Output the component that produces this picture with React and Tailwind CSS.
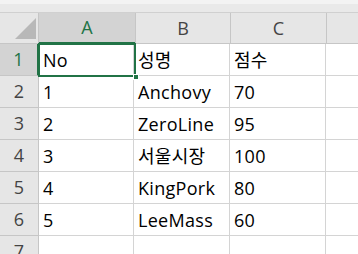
import React from "react";

const rows = [
  ["No", "성명", "점수"],
  ["1", "Anchovy", "70"],
  ["2", "ZeroLine", "95"],
  ["3", "서울시장", "100"],
  ["4", "KingPork", "80"],
  ["5", "LeeMass", "60"],
  ["", "", ""],
];

const font = { fontFamily: '"Open Sans", "Noto Sans CJK KR", sans-serif' };

export default function App() {
  return (
    <div className="w-[358px] h-[254px] overflow-hidden bg-white relative" style={font}>
      {/* top strip */}
      <div className="h-[13px] flex flex-col">
        <div className="h-[4px] bg-[#f3f3f3]" />
        <div className="flex-1 bg-[#e9e9e9] border-b border-[#d0d0d0]" />
      </div>
      {/* column header */}
      <div className="flex h-[31px] bg-[#e6e6e6] border-b border-[#c6c6c6]">
        <div className="w-[39px] shrink-0 border-r border-[#c6c6c6] relative">
          <svg className="absolute left-[15px] top-[5px]" width="21" height="21" viewBox="0 0 21 21">
            <polygon points="21,0 21,21 0,21" fill="#b8b8b8" />
          </svg>
        </div>
        <div className="w-[96px] shrink-0 bg-[#d3d3d3] border-b-2 border-[#217346] flex items-center justify-center text-[18px] text-[#217346] -mb-px">
          A
        </div>
        <div className="w-[96px] shrink-0 border-r border-l border-[#c6c6c6] flex items-center justify-center text-[18px] text-[#444]">
          B
        </div>
        <div className="w-[96px] shrink-0 border-r border-[#c6c6c6] flex items-center justify-center text-[18px] text-[#444]">
          C
        </div>
        <div className="flex-1" />
      </div>
      {/* body */}
      {rows.map((r, i) => (
        <div key={i} className="flex h-[32px]">
          <div
            className={
              i === 0
                ? "w-[39px] shrink-0 bg-[#d3d3d3] border-r-2 border-[#217346] border-b border-b-[#c6c6c6] flex items-center justify-center text-[18px] text-[#217346]"
                : "w-[39px] shrink-0 bg-[#e6e6e6] border-r border-b border-[#c6c6c6] flex items-center justify-center text-[18px] text-[#444]"
            }
          >
            {i + 1}
          </div>
          {r.map((c, j) => (
            <div
              key={j}
              className={
                (j === 0 ? "w-[95px] " : "w-[96px] ") +
                "shrink-0 border-r border-b border-[#d4d4d4] flex items-end pl-[4px] pb-[3px] text-[18px] text-black leading-[24px] tracking-[0.3px]"
              }
            >
              {c}
            </div>
          ))}
          <div className="flex-1 border-b border-[#d4d4d4]" />
        </div>
      ))}
      {/* selection */}
      <div className="absolute left-[38px] top-[43px] w-[98px] h-[34px] border-2 border-[#217346] pointer-events-none" />
      <div className="absolute left-[133px] top-[74px] w-[6px] h-[6px] bg-[#217346] border border-white" />
    </div>
  );
}
